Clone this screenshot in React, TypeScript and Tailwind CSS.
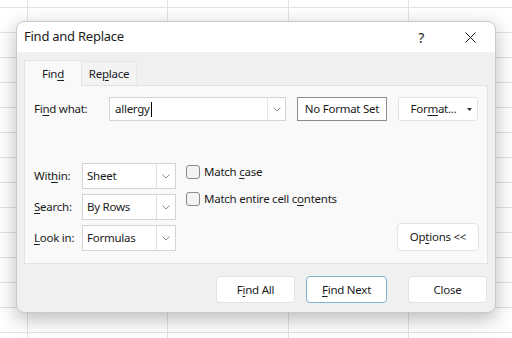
const font = "font-['Noto_Sans',sans-serif] tracking-[-0.25px]";

function Chevron() {
  return (
    <svg width="8" height="5" viewBox="0 0 8 5" fill="none">
      <polyline points="0.5,0.5 4,4 7.5,0.5" stroke="#8a8a8a" strokeWidth="1" />
    </svg>
  );
}

function Key({ children }: { children: React.ReactNode }) {
  return <span className="underline underline-offset-2 decoration-1">{children}</span>;
}

function Select({ value }: { value: string }) {
  return (
    <div className="flex h-[26px] w-[94px] border border-[#d4d4d4] bg-white">
      <div className="flex flex-1 items-center pl-[4px] text-[11.5px] text-[#1b1b1b]">{value}</div>
      <div className="flex w-[19px] items-center justify-center border-l border-[#e0e0e0]">
        <Chevron />
      </div>
    </div>
  );
}

function Checkbox({ children }: { children: React.ReactNode }) {
  return (
    <div className="flex h-[16px] items-center gap-[4px]">
      <div className="h-[14px] w-[14px] rounded-[3px] border border-[#8a8a8a] bg-[#f3f3f3]" />
      <span className="text-[11.5px] leading-[16px] text-[#1b1b1b]">{children}</span>
    </div>
  );
}

function Button({ children, w, focus }: { children: React.ReactNode; w: string; focus?: boolean }) {
  return (
    <div
      className={`flex h-[27px] ${w} items-center justify-center rounded-[4px] border bg-white text-[11.5px] text-[#1b1b1b] ${
        focus ? "border-[#7fb2cc]" : "border-[#e3e3e3]"
      }`}
    >
      {children}
    </div>
  );
}

export default function App() {
  return (
    <div className="h-[338px] w-[512px] overflow-hidden bg-white bg-[linear-gradient(to_right,transparent_27px,#e3e3e3_27px,#e3e3e3_28px,transparent_28px,transparent_167px,#e3e3e3_167px,#e3e3e3_168px,transparent_168px,transparent_288px,#e3e3e3_288px,#e3e3e3_289px,transparent_289px,transparent_408px,#e3e3e3_408px,#e3e3e3_409px,transparent_409px)]">
      <div className={`h-full w-full bg-[repeating-linear-gradient(to_bottom,transparent_0px,transparent_7px,#e3e3e3_7px,#e3e3e3_8px,transparent_8px,transparent_25px)] pl-[16px] pt-[21px] ${font}`}>
        {/* Dialog */}
        <div className="flex h-[292px] w-[480px] flex-col rounded-[8px] border border-[#c9c9c9] bg-[#f0f0f0] shadow-[0_6px_20px_rgba(0,0,0,0.28)]">
          {/* Title bar */}
          <div className="flex h-[30px] items-center rounded-t-[8px] bg-white pl-[7px] pr-[19px]">
            <span className="flex-1 text-[13px] text-[#1b1b1b]">Find and Replace</span>
            <span className="mr-[41px] text-[14px] text-[#1b1b1b]">?</span>
            <svg width="11" height="11" viewBox="0 0 11 11">
              <path d="M0.5 0.5 L10.5 10.5 M10.5 0.5 L0.5 10.5" stroke="#1b1b1b" strokeWidth="1" />
            </svg>
          </div>

          {/* Body */}
          <div className="flex flex-1 flex-col px-[7px] pt-[8px]">
            {/* Tabs */}
            <div className="flex items-end">
              <div className="relative z-10 -mb-px flex h-[26px] w-[58px] items-center justify-center border border-b-0 border-[#e3e3e3] bg-[#f9f9f9] text-[11.5px] text-[#1b1b1b]">
                <span>
                  Fin<Key>d</Key>
                </span>
              </div>
              <div className="flex h-[24px] w-[55px] items-center justify-center border border-b-0 border-l-0 border-[#e6e6e6] bg-[#f3f3f3] text-[11.5px] text-[#1b1b1b]">
                <span>
                  Re<Key>p</Key>lace
                </span>
              </div>
            </div>

            {/* Panel */}
            <div className="flex h-[179px] w-[464px] flex-col border border-[#e3e3e3] bg-[#f9f9f9] pl-[9px] pr-[8px] pt-[11px]">
              <div className="flex items-center">
                <span className="w-[75px] text-[11.5px] text-[#1b1b1b]">
                  Fi<Key>n</Key>d what:
                </span>
                <div className="flex h-[24px] w-[177px] border border-[#d4d4d4] bg-white">
                  <div className="flex flex-1 items-center pl-[5px] text-[11.5px] text-[#1b1b1b]">
                    allergy<span className="ml-px h-[15px] w-px bg-black" />
                  </div>
                  <div className="flex w-[18px] items-center justify-center border-l border-[#e6e6e6]">
                    <Chevron />
                  </div>
                </div>
                <div className="ml-[11px] flex h-[24px] w-[90px] items-center justify-center border border-[#8c8c8c] bg-white text-[11.5px] text-[#1b1b1b]">
                  No Format Set
                </div>
                <div className="ml-[11px] flex h-[24px] w-[80px] items-center justify-center rounded-[3px] border border-[#e3e3e3] bg-white text-[11.5px] text-[#1b1b1b]">
                  <span className="ml-[6px]">
                    For<Key>m</Key>at...
                  </span>
                  <svg className="ml-[10px]" width="5" height="3" viewBox="0 0 5 3">
                    <path d="M0 0 L5 0 L2.5 3 Z" fill="#333" />
                  </svg>
                </div>
              </div>

              <div className="mt-[42px] flex items-end">
                <div className="flex flex-col gap-[5px]">
                  {[
                    { label: <>Wit<Key>h</Key>in:</>, value: "Sheet" },
                    { label: <><Key>S</Key>earch:</>, value: "By Rows" },
                    { label: <><Key>L</Key>ook in:</>, value: "Formulas" },
                  ].map((row) => (
                    <div key={row.value} className="flex items-center">
                      <span className="w-[48px] text-[11.5px] text-[#1b1b1b]">{row.label}</span>
                      <Select value={row.value} />
                    </div>
                  ))}
                </div>
                <div className="ml-[10px] flex flex-col gap-[11px] self-start pt-[1px]">
                  <Checkbox>
                    Match <Key>c</Key>ase
                  </Checkbox>
                  <Checkbox>
                    Match entire cell c<Key>o</Key>ntents
                  </Checkbox>
                </div>
                <div className="flex-1" />
                <div className="flex h-[28px] w-[82px] items-center justify-center rounded-[4px] border border-[#e3e3e3] bg-white text-[11.5px] text-[#1b1b1b]">
                  Op<Key>t</Key>ions &lt;&lt;
                </div>
              </div>
            </div>

            {/* Buttons */}
            <div className="mt-[12px] flex justify-end pr-px">
              <Button w="w-[79px]">
                F<Key>i</Key>nd All
              </Button>
              <div className="ml-[11px]">
                <Button w="w-[81px]" focus>
                  <Key>F</Key>ind Next
                </Button>
              </div>
              <div className="ml-[21px]">
                <Button w="w-[79px]">Close</Button>
              </div>
            </div>
          </div>
        </div>
      </div>
    </div>
  );
}
